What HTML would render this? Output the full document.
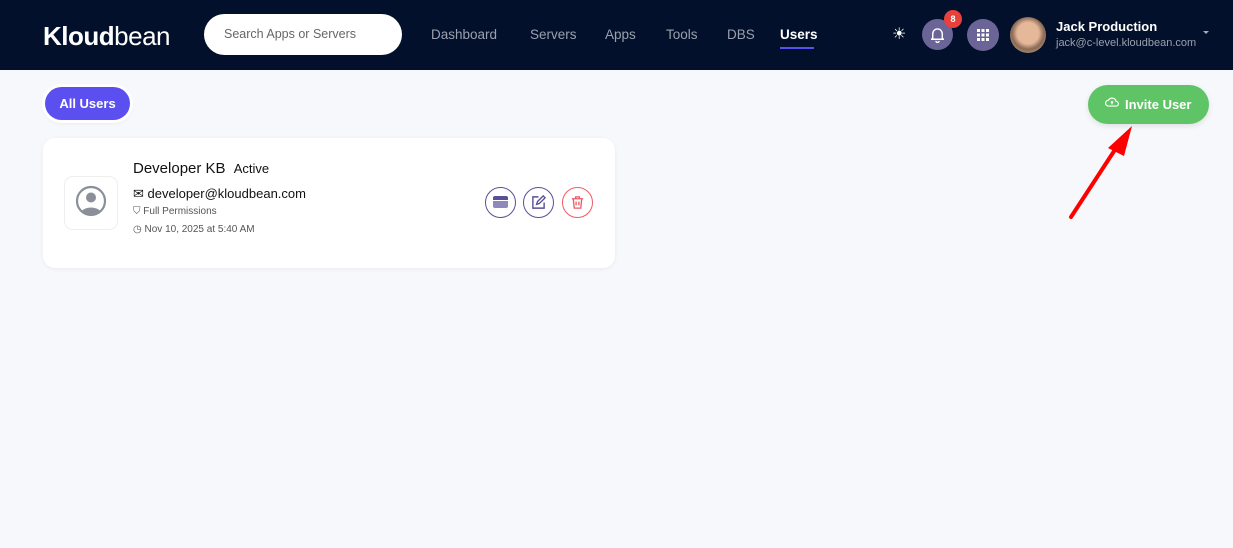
<!DOCTYPE html>
<html><head><meta charset="utf-8"><style>
*{box-sizing:border-box;margin:0;padding:0}
body{width:1233px;height:548px;background:#f7f8fb;font-family:"Liberation Sans",sans-serif;position:relative;overflow:hidden}
.hdr{position:absolute;left:0;top:0;width:1233px;height:70px;background:#03102b}
.abs{position:absolute}
.logo{left:43px;top:21px;color:#fff;font-size:26px;font-weight:bold;letter-spacing:-0.5px}
.logo span{font-weight:normal}
.search{left:204px;top:14px;width:198px;height:41px;background:#fff;border-radius:21px;color:#666;font-size:12.5px;padding:13px 0 0 20px}
.nav{top:27px;color:#9aa0ad;font-size:13.5px}
.act{color:#fff;font-weight:bold}
.circ{border-radius:50%;background:#6b6496}
.card{left:43px;top:138px;width:572px;height:130px;background:#fff;border-radius:12px;box-shadow:0 1px 4px rgba(0,0,0,.06)}
.ib{width:31px;height:31px;border-radius:50%;border:1.3px solid #5a4f9a;top:187px}
</style></head><body>
<div class="hdr"></div>
<div class="abs logo">Kloud<span>bean</span></div>
<div class="abs search">Search Apps or Servers</div>
<div class="abs nav" style="left:431px">Dashboard</div>
<div class="abs nav" style="left:530px">Servers</div>
<div class="abs nav" style="left:605px">Apps</div>
<div class="abs nav" style="left:666px">Tools</div>
<div class="abs nav" style="left:727px">DBS</div>
<div class="abs nav act" style="left:780px">Users</div>
<div class="abs" style="left:780px;top:47px;width:34px;height:2px;background:#5b4ff0"></div>
<div class="abs" style="left:892px;top:24px;color:#fff;font-size:16px">☀</div>
<div class="abs circ" style="left:922px;top:19px;width:31px;height:31px"></div>
<svg class="abs" style="left:928px;top:25px" width="19" height="19" viewBox="0 0 24 24" fill="none" stroke="#fff" stroke-width="1.8"><path d="M6 17V11a6 6 0 0 1 12 0v6l2 1H4z M10 20a2 2 0 0 0 4 0"/></svg>
<div class="abs" style="left:944px;top:10px;width:18px;height:18px;border-radius:50%;background:#e8403a;color:#fff;font-size:9px;font-weight:bold;text-align:center;line-height:18px">8</div>
<div class="abs circ" style="left:967px;top:19px;width:32px;height:32px"></div>
<div class="abs" style="left:977px;top:29px;width:12px;height:12px;background:repeating-linear-gradient(90deg,#fff 0 3px,transparent 3px 4.5px);-webkit-mask:repeating-linear-gradient(0deg,#000 0 3px,transparent 3px 4.5px)"></div>
<div class="abs" style="left:1010px;top:17px;width:36px;height:36px;border-radius:50%;background:radial-gradient(circle at 50% 45%,#e6b89a 0 40%,#8a6a55 60%,#c9b29c)"></div>
<div class="abs" style="left:1056px;top:19px;color:#fff;font-size:13px;font-weight:bold">Jack Production</div>
<div class="abs" style="left:1056px;top:37px;color:#9aa0ad;font-size:11px">jack@c-level.kloudbean.com</div>
<div class="abs" style="left:1203px;top:31px;width:0;height:0;border:3px solid transparent;border-top-color:#aaa"></div>
<div class="abs" style="left:45px;top:87px;width:85px;height:33px;border-radius:17px;background:#5b4ff0;box-shadow:0 0 0 3px #fff,0 2px 6px rgba(0,0,0,.1);color:#fff;font-weight:bold;font-size:13px;text-align:center;line-height:33px">All Users</div>
<div class="abs" style="left:1088px;top:85px;width:121px;height:39px;border-radius:20px;background:#5ec466;box-shadow:0 2px 6px rgba(0,0,0,.1);color:#fff;font-weight:bold;font-size:13px;line-height:39px;padding-left:37px">Invite User</div>
<svg class="abs" style="left:1105px;top:96px" width="14" height="12" viewBox="0 0 24 20" fill="none" stroke="#fff" stroke-width="2"><path d="M6 17a5 5 0 0 1 0-10 7 7 0 0 1 13 2 4 4 0 0 1 0 8z M12 14V9 M10 11l2-2 2 2"/></svg>
<svg class="abs" style="left:1060px;top:120px" width="80" height="105" viewBox="0 0 80 105"><path d="M11 97L60 22" stroke="#f00" stroke-width="4" stroke-linecap="round"/><path d="M72 6L48 28 64 36z" fill="#f00"/></svg>
<div class="abs card"></div>
<div class="abs" style="left:64px;top:176px;width:54px;height:54px;border:1px solid #eee;border-radius:9px;background:#fff"></div>
<svg class="abs" style="left:75px;top:185px" width="32" height="32" viewBox="0 0 32 32"><circle cx="16" cy="16" r="14" fill="none" stroke="#8b8f99" stroke-width="2.2"/><circle cx="16" cy="12.5" r="5" fill="#8b8f99"/><path d="M6.5 26a11 7 0 0 1 19 0a14 14 0 0 1-19 0z" fill="#8b8f99"/></svg>
<div class="abs" style="left:133px;top:160px;font-size:15px;color:#111">Developer KB <span style="font-size:13px;margin-left:4px">Active</span></div>
<div class="abs" style="left:133px;top:186px;font-size:13px;color:#111">✉ developer@kloudbean.com</div>
<div class="abs" style="left:133px;top:206px;font-size:10px;color:#555">⛉ Full Permissions</div>
<div class="abs" style="left:133px;top:224px;font-size:10px;color:#555">◷ Nov 10, 2025 at 5:40 AM</div>
<div class="abs ib" style="left:485px"></div>
<div class="abs" style="left:493px;top:196px;width:15px;height:12px;border-radius:2px;background:linear-gradient(#5a4f9a 0 4px,#fff 4px 5px,#8f88bb 5px 12px)"></div>
<div class="abs ib" style="left:523px"></div>
<svg class="abs" style="left:531px;top:195px" width="15" height="15" viewBox="0 0 16 16" fill="none" stroke="#5a4f9a" stroke-width="1.5"><path d="M8 2H2v12h12V8"/><path d="M6 10l1-3 6-6 2 2-6 6z"/></svg>
<div class="abs ib" style="left:562px;border-color:#ef5a64"></div>
<svg class="abs" style="left:570px;top:195px" width="15" height="15" viewBox="0 0 16 16" fill="none" stroke="#ef5a64" stroke-width="1.4"><path d="M2 4h12M6 4V2h4v2M3.5 4l1 10h7l1-10M6.5 7v4M9.5 7v4"/></svg>
</body></html>
